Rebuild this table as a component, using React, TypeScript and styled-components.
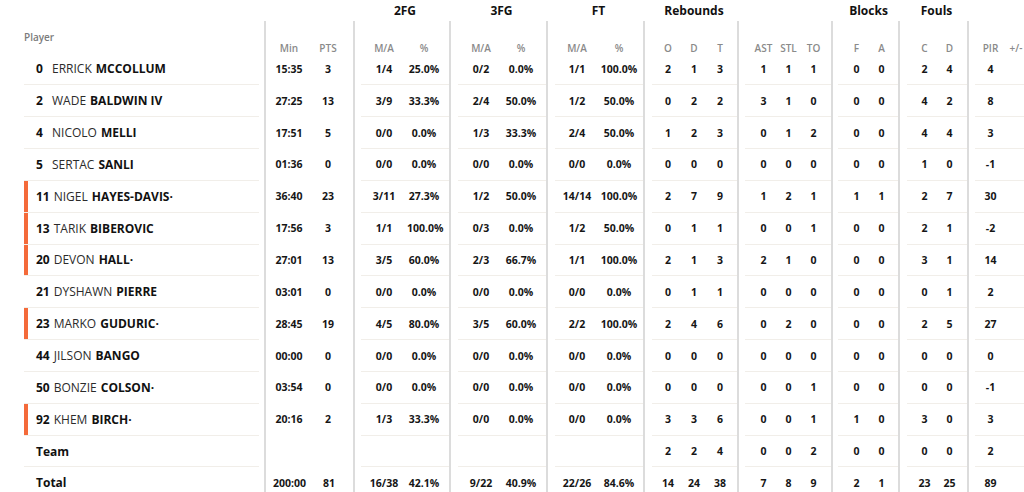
import React from "react";
import styled, { createGlobalStyle } from "styled-components";

const GlobalStyle = createGlobalStyle`
  html, body { margin: 0; padding: 0; background: #ffffff; }
  body {
    font-family: "Open Sans", "Liberation Sans", sans-serif;
    color: #111;
    overflow: hidden;
  }
`;

const ROW_H = 31.85;

type Player = {
  num?: string;
  first?: string;
  last: string;
  dot?: boolean;
  starter?: boolean;
  bold?: boolean;
  stats: string[];
};

const players: Player[] = [
  { num: "0", first: "ERRICK", last: "MCCOLLUM", stats: ["15:35", "3", "1/4", "25.0%", "0/2", "0.0%", "1/1", "100.0%", "2", "1", "3", "1", "1", "1", "0", "0", "2", "4", "4", ""] },
  { num: "2", first: "WADE", last: "BALDWIN IV", stats: ["27:25", "13", "3/9", "33.3%", "2/4", "50.0%", "1/2", "50.0%", "0", "2", "2", "3", "1", "0", "0", "0", "4", "2", "8", ""] },
  { num: "4", first: "NICOLO", last: "MELLI", stats: ["17:51", "5", "0/0", "0.0%", "1/3", "33.3%", "2/4", "50.0%", "1", "2", "3", "0", "1", "2", "0", "0", "4", "4", "3", ""] },
  { num: "5", first: "SERTAC", last: "SANLI", stats: ["01:36", "0", "0/0", "0.0%", "0/0", "0.0%", "0/0", "0.0%", "0", "0", "0", "0", "0", "0", "0", "0", "1", "0", "-1", ""] },
  { num: "11", first: "NIGEL", last: "HAYES-DAVIS", dot: true, starter: true, stats: ["36:40", "23", "3/11", "27.3%", "1/2", "50.0%", "14/14", "100.0%", "2", "7", "9", "1", "2", "1", "1", "1", "2", "7", "30", ""] },
  { num: "13", first: "TARIK", last: "BIBEROVIC", starter: true, stats: ["17:56", "3", "1/1", "100.0%", "0/3", "0.0%", "1/2", "50.0%", "0", "1", "1", "0", "0", "1", "0", "0", "2", "1", "-2", ""] },
  { num: "20", first: "DEVON", last: "HALL", dot: true, starter: true, stats: ["27:01", "13", "3/5", "60.0%", "2/3", "66.7%", "1/1", "100.0%", "2", "1", "3", "2", "1", "0", "0", "0", "3", "1", "14", ""] },
  { num: "21", first: "DYSHAWN", last: "PIERRE", stats: ["03:01", "0", "0/0", "0.0%", "0/0", "0.0%", "0/0", "0.0%", "0", "1", "1", "0", "0", "0", "0", "0", "0", "1", "2", ""] },
  { num: "23", first: "MARKO", last: "GUDURIC", dot: true, starter: true, stats: ["28:45", "19", "4/5", "80.0%", "3/5", "60.0%", "2/2", "100.0%", "2", "4", "6", "0", "2", "0", "0", "0", "2", "5", "27", ""] },
  { num: "44", first: "JILSON", last: "BANGO", stats: ["00:00", "0", "0/0", "0.0%", "0/0", "0.0%", "0/0", "0.0%", "0", "0", "0", "0", "0", "0", "0", "0", "0", "0", "0", ""] },
  { num: "50", first: "BONZIE", last: "COLSON", dot: true, stats: ["03:54", "0", "0/0", "0.0%", "0/0", "0.0%", "0/0", "0.0%", "0", "0", "0", "0", "0", "1", "0", "0", "0", "0", "-1", ""] },
  { num: "92", first: "KHEM", last: "BIRCH", dot: true, starter: true, stats: ["20:16", "2", "1/3", "33.3%", "0/0", "0.0%", "0/0", "0.0%", "3", "3", "6", "0", "0", "1", "1", "0", "3", "0", "3", ""] },
  { last: "Team", bold: true, stats: ["", "", "", "", "", "", "", "", "2", "2", "4", "0", "0", "2", "0", "0", "0", "0", "2", ""] },
  { last: "Total", bold: true, stats: ["200:00", "81", "16/38", "42.1%", "9/22", "40.9%", "22/26", "84.6%", "14", "24", "38", "7", "8", "9", "2", "1", "23", "25", "89", ""] },
];

type GroupDef = {
  title?: string;
  width: number;
  lineInset: number;
  pad: number;
  lines: boolean;
  cols: { label: string; width: number }[];
};

const groups: GroupDef[] = [
  { width: 89, lineInset: 7, pad: 0, lines: false, cols: [{ label: "Min", width: 32 }, { label: "PTS", width: 46 }] },
  { title: "2FG", width: 96, lineInset: 6, pad: 0, lines: true, cols: [{ label: "M/A", width: 46 }, { label: "%", width: 34 }] },
  { title: "3FG", width: 97, lineInset: 7, pad: 0, lines: true, cols: [{ label: "M/A", width: 46 }, { label: "%", width: 34 }] },
  { title: "FT", width: 97, lineInset: 7, pad: 0, lines: true, cols: [{ label: "M/A", width: 44 }, { label: "%", width: 40 }] },
  { title: "Rebounds", width: 94, lineInset: 7, pad: 3, lines: true, cols: [{ label: "O", width: 26 }, { label: "D", width: 26 }, { label: "T", width: 26 }] },
  { width: 94, lineInset: 6, pad: 6, lines: true, cols: [{ label: "AST", width: 25 }, { label: "STL", width: 25 }, { label: "TO", width: 25 }] },
  { title: "Blocks", width: 67, lineInset: 5, pad: 6, lines: true, cols: [{ label: "F", width: 25 }, { label: "A", width: 25 }] },
  { title: "Fouls", width: 69, lineInset: 7, pad: 5, lines: true, cols: [{ label: "C", width: 25 }, { label: "D", width: 25 }] },
  { width: 80, lineInset: 6, pad: 3, lines: true, cols: [{ label: "PIR", width: 25 }, { label: "+/-", width: 26 }] },
];

const Board = styled.div`
  display: flex;
  align-items: flex-start;
  width: 1024px;
  height: 492px;
  overflow: hidden;
`;

const PlayerCol = styled.div`
  flex: 0 0 264px;
  box-sizing: border-box;
  padding: 0 5px 0 24px;
`;

const PlayerHead = styled.div`
  height: 53.5px;
  box-sizing: border-box;
  display: flex;
  align-items: flex-end;
  padding-bottom: 10.5px;
  font-size: 10px;
  line-height: 12px;
  font-weight: 600;
  color: #7b7b7b;
`;

const PlayerRow = styled.div<{ $starter?: boolean }>`
  height: ${ROW_H}px;
  box-sizing: border-box;
  border-bottom: 1px solid #f1eee9;
  display: flex;
  align-items: center;
  padding-left: 12px;
  box-shadow: ${(p) => (p.$starter ? "inset 4px 0 0 #f46a3a" : "none")};
  font-size: 12px;
  white-space: nowrap;
`;

const Num = styled.span`
  display: inline-block;
  min-width: 12px;
  margin-right: 4px;
  font-weight: 700;
  color: #111;
`;

const First = styled.span`
  font-weight: 400;
  color: #2b2b2b;
  margin-right: 4px;
`;

const Last = styled.span`
  font-weight: 700;
  color: #111;
`;

const Group = styled.div<{ $w: number }>`
  flex: 0 0 ${(p) => p.$w}px;
  display: flex;
  flex-direction: column;
`;

const GroupTitle = styled.div`
  height: 21px;
  line-height: 21px;
  padding-left: 8px;
  text-align: center;
  font-size: 12px;
  font-weight: 700;
  color: #111;
  white-space: nowrap;
`;

const GroupBody = styled.div`
  border-left: 2px solid #dcdcdc;
  height: 480px;
`;

const HeadRow = styled.div<{ $m: number; $p: number }>`
  height: 32.5px;
  box-sizing: border-box;
  display: flex;
  align-items: flex-end;
  margin-left: ${(p) => p.$m}px;
  padding-left: ${(p) => p.$p}px;
`;

const HeadCell = styled.div<{ $w: number }>`
  flex: 0 0 ${(p) => p.$w}px;
  text-align: center;
  font-size: 10px;
  line-height: 12px;
  font-weight: 600;
  color: #8a8a8a;
  white-space: nowrap;
`;

const StatRow = styled.div<{ $m: number; $p: number; $lines: boolean }>`
  height: ${ROW_H}px;
  box-sizing: border-box;
  border-bottom: 1px solid ${(p) => (p.$lines ? "#f1eee9" : "transparent")};
  display: flex;
  align-items: center;
  margin-left: ${(p) => p.$m}px;
  padding-left: ${(p) => p.$p}px;
`;

const StatCell = styled.div<{ $w: number }>`
  flex: 0 0 ${(p) => p.$w}px;
  text-align: center;
  font-size: 10.5px;
  font-weight: 700;
  color: #161616;
  white-space: nowrap;
`;

export default function App() {
  let offset = 0;
  const ranges = groups.map((g) => {
    const start = offset;
    offset += g.cols.length;
    return start;
  });

  return (
    <>
      <GlobalStyle />
      <Board>
        <PlayerCol>
          <PlayerHead>Player</PlayerHead>
          {players.map((pl, i) => (
            <PlayerRow key={i} $starter={pl.starter}>
              {pl.num !== undefined && <Num>{pl.num}</Num>}
              {pl.first && <First>{pl.first}</First>}
              <Last>
                {pl.last}
                {pl.dot ? "·" : ""}
              </Last>
            </PlayerRow>
          ))}
        </PlayerCol>
        {groups.map((g, gi) => (
          <Group key={gi} $w={g.width}>
            <GroupTitle>{g.title ?? ""}</GroupTitle>
            <GroupBody>
              <HeadRow $m={g.lineInset} $p={g.pad}>
                {g.cols.map((c, ci) => (
                  <HeadCell key={ci} $w={c.width}>
                    {c.label}
                  </HeadCell>
                ))}
              </HeadRow>
              {players.map((pl, ri) => (
                <StatRow key={ri} $m={g.lineInset} $p={g.pad} $lines={g.lines}>
                  {g.cols.map((c, ci) => (
                    <StatCell key={ci} $w={c.width}>
                      {pl.stats[ranges[gi] + ci]}
                    </StatCell>
                  ))}
                </StatRow>
              ))}
            </GroupBody>
          </Group>
        ))}
      </Board>
    </>
  );
}
